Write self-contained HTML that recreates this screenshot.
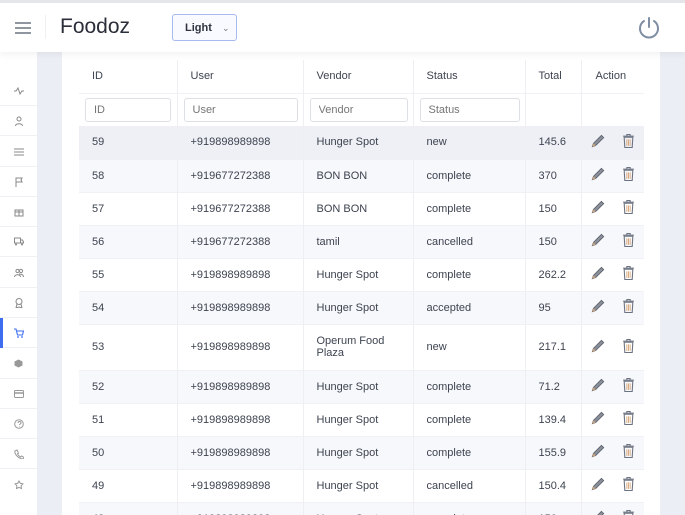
<!DOCTYPE html>
<html style="width:685px;height:515px;overflow:hidden"><head><style>
*{box-sizing:border-box;margin:0;padding:0}
body{width:685px;height:515px;overflow:hidden;font-family:"Liberation Sans",sans-serif;background:#eceef5;position:relative;color:#3d4350}
.top{position:absolute;left:0;top:0;width:685px;height:3px;background:#e4e6ea}
.hdr{position:absolute;left:0;top:3px;width:685px;height:49px;background:#fff;box-shadow:0 3px 6px rgba(0,0,0,.05);z-index:3}
.side{position:absolute;left:0;top:52px;width:37px;height:463px;background:#fff;z-index:2}
.si{position:absolute;left:0;width:37px;height:30px;border-bottom:1px solid #eef0f3;display:flex;align-items:center;justify-content:center}
.card{position:absolute;left:62px;top:52px;width:598px;height:463px;background:#fff}
.wrap{position:absolute;left:0;top:0;width:685px;height:515px;overflow:hidden}
table{position:absolute;left:79px;top:60px;width:565px;border-collapse:collapse;font-size:11px}
td{border-right:1px solid #edeff3;padding:0 0 0 13px;height:33px;vertical-align:middle}
td:last-child{border-right:none}
tr{border-bottom:1px solid #f0f1f4}
tr.g{background:#f7f8fb}
tr.h{background:#eef0f6}
input{width:86px;height:24px;border:1px solid #dcdfe5;border-radius:3px;font-size:11px;padding-left:8px;font-family:inherit;color:#888}
</style></head><body>
<div class="wrap">
<div class="top"></div>
<div class="hdr">
 <svg style="position:absolute;left:15px;top:19px" width="16" height="12"><path d="M0 1h16M0 6h16M0 11h16" stroke="#6b7380" stroke-width="1.6"/></svg>
 <div style="position:absolute;left:45px;top:12px;width:1px;height:24px;background:#f0f0f0"></div>
 <div style="position:absolute;left:60px;top:12px;font-size:21px;color:#2b2f3a">Foodoz</div>
 <div style="position:absolute;left:172px;top:11px;width:65px;height:27px;border:1px solid #a7b9ef;border-radius:3px;background:#f9faff;font-size:11px;font-weight:bold;color:#2f3440;padding:7px 0 0 12px">Light <span style="font-weight:normal;color:#777;margin-left:7px;font-size:9px">&#8964;</span></div>
 <svg style="position:absolute;left:638px;top:13px" width="22" height="24" viewBox="0 0 22 24"><path d="M6 5A9 9 0 1 0 16 5" fill="none" stroke="#7f8ea3" stroke-width="2" stroke-linecap="round"/><path d="M11 2v9" stroke="#7f8ea3" stroke-width="2" stroke-linecap="round"/></svg>
</div>
<div class="side">
 <div class="si" style="top:24px"><svg width="10" height="8"><path d="M0 4h2l2-3 2 6 2-3h2" fill="none" stroke="#888" stroke-width="1"/></svg></div>
 <div class="si" style="top:54px"><svg width="8" height="10"><circle cx="4" cy="3" r="2" fill="none" stroke="#888"/><path d="M0.5 10c0-3 7-3 7 0" fill="none" stroke="#888"/></svg></div>
 <div class="si" style="top:85px"><svg width="10" height="8"><path d="M0 1h10M0 4h10M0 7h10" stroke="#888"/></svg></div>
 <div class="si" style="top:115px"><svg width="8" height="10"><path d="M1 10V1h6l-1 2 1 2H1" fill="none" stroke="#888"/></svg></div>
 <div class="si" style="top:145px"><svg width="10" height="10"><rect x="1" y="3" width="8" height="6" fill="none" stroke="#888"/><path d="M5 3v6M1 5h8" stroke="#888"/></svg></div>
 <div class="si" style="top:175px"><svg width="10" height="9"><rect x="0.5" y="1" width="6" height="5" fill="none" stroke="#888"/><path d="M6.5 3h2l1 2v1h-3" fill="none" stroke="#888"/><circle cx="2" cy="7.5" r="1" fill="#888"/><circle cx="8" cy="7.5" r="1" fill="#888"/></svg></div>
 <div class="si" style="top:206px"><svg width="10" height="9"><circle cx="3.5" cy="3" r="1.6" fill="none" stroke="#888"/><circle cx="7" cy="3" r="1.6" fill="none" stroke="#888"/><path d="M0.5 9c0-3 6-3 6 0M5 6c3 0 4.5 1 4.5 3" fill="none" stroke="#888"/></svg></div>
 <div class="si" style="top:236px"><svg width="8" height="10"><circle cx="4" cy="3.5" r="3" fill="none" stroke="#888"/><path d="M2 6l-1 4 3-1 3 1-1-4" fill="none" stroke="#888"/></svg></div>
 <div class="si" style="top:266px"><div style="position:absolute;left:0;top:0;width:3px;height:30px;background:#3e6df0"></div><svg width="10" height="10"><path d="M0 1h2l1.5 6h5l1-4H3" fill="none" stroke="#3e6df0" stroke-width="1.1"/><circle cx="4" cy="9" r="0.9" fill="#3e6df0"/><circle cx="8" cy="9" r="0.9" fill="#3e6df0"/></svg></div>
 <div class="si" style="top:297px"><svg width="9" height="9"><path d="M4.5 0.5L8.5 2.5v4L4.5 8.5 0.5 6.5v-4z" fill="#999"/></svg></div>
 <div class="si" style="top:327px"><svg width="10" height="8"><rect x="0.5" y="0.5" width="9" height="7" rx="1" fill="none" stroke="#999"/><path d="M0.5 3h9" stroke="#999" stroke-width="1.5"/></svg></div>
 <div class="si" style="top:357px"><svg width="10" height="10"><circle cx="5" cy="5" r="4.3" fill="none" stroke="#999"/><path d="M4 4c0-2 3-2 3 0 0 1-1.5 1-1.5 2M5.5 7.5v.5" fill="none" stroke="#999"/></svg></div>
 <div class="si" style="top:387px"><svg width="10" height="10"><path d="M1 2l2-1 1.5 3-1 1c1 1.5 2 2.5 3 3l1-1 2.5 1.5-1 1.5C5 10 0 5 1 2z" fill="none" stroke="#999"/></svg></div>
 <div class="si" style="top:418px;border:none"><svg width="10" height="10"><path d="M5 1l1.3 2.3 2.6 .5-1.8 2 .4 2.7L5 7.4 2.5 8.5l.4-2.7-1.8-2 2.6-.5z" fill="none" stroke="#999"/></svg></div>
</div>
<div class="card"></div>
<table>
<tr style="height:33px"><td style="width:98px">ID</td><td style="width:126px">User</td><td style="width:110px">Vendor</td><td style="width:112px">Status</td><td style="width:56px">Total</td><td style="padding-left:14px">Action</td></tr>
<tr style="height:33px"><td style="padding-left:6px"><input placeholder="ID" style="width:86px"></td><td style="padding-left:6px"><input placeholder="User" style="width:114px"></td><td style="padding-left:6px"><input placeholder="Vendor" style="width:98px"></td><td style="padding-left:6px"><input placeholder="Status" style="width:100px"></td><td></td><td></td></tr>
</table>
<table style="top:126px" id="t2">
<colgroup><col style="width:98px"><col style="width:126px"><col style="width:110px"><col style="width:112px"><col style="width:56px"><col></colgroup>
</table>
</div>
<script>
const rows=[["59","+919898989898","Hunger Spot","new","145.6"],["58","+919677272388","BON BON","complete","370"],["57","+919677272388","BON BON","complete","150"],["56","+919677272388","tamil","cancelled","150"],["55","+919898989898","Hunger Spot","complete","262.2"],["54","+919898989898","Hunger Spot","accepted","95"],["53","+919898989898","Operum Food<br>Plaza","new","217.1"],["52","+919898989898","Hunger Spot","complete","71.2"],["51","+919898989898","Hunger Spot","complete","139.4"],["50","+919898989898","Hunger Spot","complete","155.9"],["49","+919898989898","Hunger Spot","cancelled","150.4"],["48","+919898989898","Hunger Spot","complete","150"]];
const pen='<svg width="16" height="16" viewBox="0 0 14 14"><path d="M2 12l1-3 7-7 2 2-7 7z" fill="#8a8f99" stroke="#5b606b" stroke-width=".7"/><path d="M2 12l1-3 2 2z" fill="#c9a27a"/></svg>';
const bin='<svg width="13" height="16" viewBox="0 0 12 14"><path d="M1 2.5h10M4.5 2.5V1h3v1.5" fill="none" stroke="#6b7280" stroke-width="1"/><path d="M2 3.5h8l-.6 9.5H2.6z" fill="none" stroke="#6b7280" stroke-width="1"/><path d="M4.5 5.5v6M6 5.5v6M7.5 5.5v6" stroke="#d4a070" stroke-width=".8"/></svg>';
let h='';rows.forEach((r,i)=>{h+=`<tr class="${i==0?'h':(i%2?'g':'')}" style="height:${i==6?46:33}px"><td>${r[0]}</td><td>${r[1]}</td><td>${r[2]}</td><td>${r[3]}</td><td>${r[4]}</td><td style="padding-left:8px;white-space:nowrap">${pen}<span style="display:inline-block;width:16px"></span>${bin}</td></tr>`});
document.getElementById('t2').innerHTML+=h;
</script>
</body></html>
